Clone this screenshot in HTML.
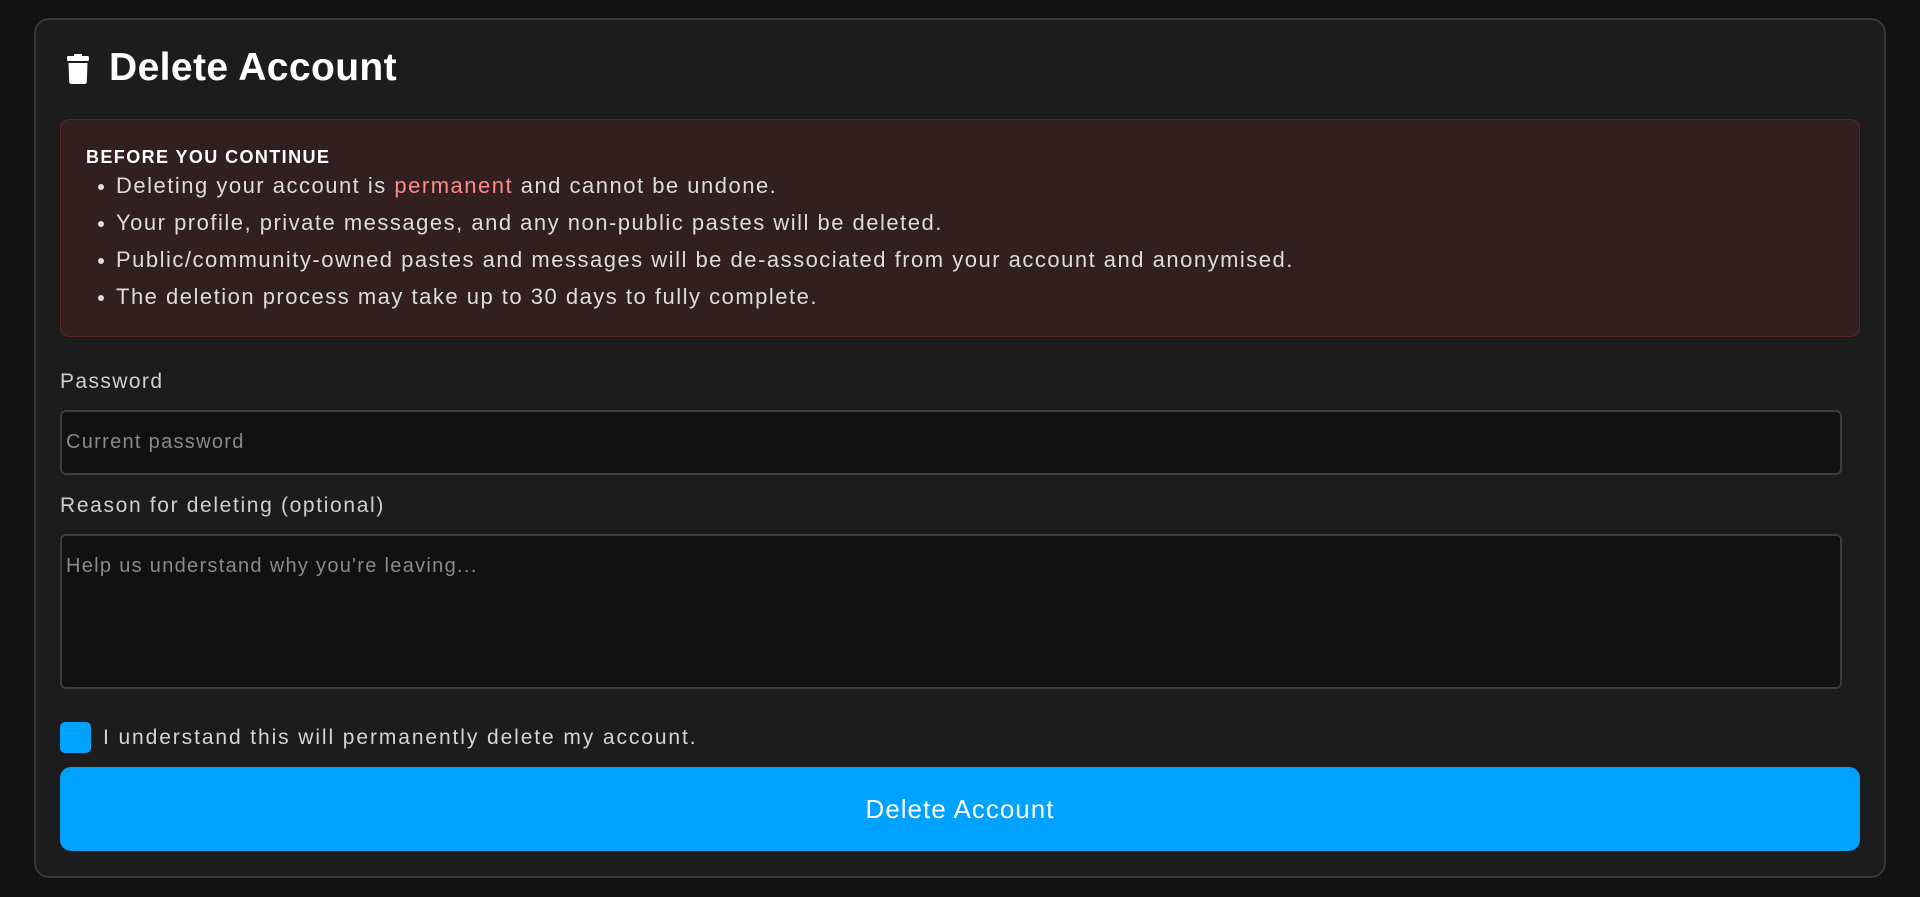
<!DOCTYPE html>
<html><head><meta charset="utf-8"><style>
*{box-sizing:border-box;margin:0;padding:0}
html,body{width:1920px;height:897px;background:#121212;overflow:hidden;font-family:"Liberation Sans",sans-serif}
.card{position:absolute;left:34px;top:18px;width:1852px;height:860px;background:#1c1c1c;border:2px solid #363636;border-radius:15px}
.title{position:absolute;left:109px;top:46px;font-size:39px;font-weight:bold;color:#fff;letter-spacing:0.4px}
.icon{position:absolute;left:67px;top:54px}
.warn{position:absolute;left:60px;top:119px;width:1800px;height:218px;background:#321f20;border:1px solid #5a2626;border-radius:9px}
.wh{position:absolute;left:86px;top:147px;font-size:18px;font-weight:bold;color:#fff;letter-spacing:1.4px}
.li{position:absolute;left:116px;font-size:22px;color:#ddd;letter-spacing:1.5px}
.li:before{content:"";position:absolute;left:-18px;top:11px;width:6px;height:6px;border-radius:50%;background:#ddd}
.red{color:#ff8a8a}
.lbl{position:absolute;left:60px;font-size:21px;color:#cfcfcf;letter-spacing:1.5px}
.inp{position:absolute;left:60px;width:1782px;background:#111;border:2px solid #3d3d3d;border-radius:6px}
.ph{position:absolute;left:66px;font-size:20px;color:#8a8a8a;letter-spacing:1.3px}
.cb{position:absolute;left:60px;top:722px;width:31px;height:31px;background:#00a2ff;border-radius:5px}
.btn{position:absolute;left:60px;top:767px;width:1800px;height:84px;background:#00a2ff;border-radius:11px;color:#fff;font-size:26px;text-align:center;line-height:84px;letter-spacing:1px}
</style></head><body>
<div class="card"></div>
<svg class="icon" width="22" height="30" viewBox="0 0 22 30"><rect x="0" y="2" width="22" height="5" rx="1.5" fill="#fff"/><rect x="7" y="0" width="8" height="4" rx="1" fill="#fff"/><path d="M1.5 9 H20.5 L19.8 28 Q19.6 30 17.5 30 H4.5 Q2.4 30 2.2 28 Z" fill="#fff"/></svg>
<div class="title">Delete Account</div>
<div class="warn"></div>
<div class="wh">BEFORE YOU CONTINUE</div>
<div class="li" style="top:173px">Deleting your account is <span class="red">permanent</span> and cannot be undone.</div>
<div class="li" style="top:210px">Your profile, private messages, and any non-public pastes will be deleted.</div>
<div class="li" style="top:247px">Public/community-owned pastes and messages will be de-associated from your account and anonymised.</div>
<div class="li" style="top:284px">The deletion process may take up to 30 days to fully complete.</div>
<div class="lbl" style="top:370px;letter-spacing:1.4px">Password</div>
<div class="inp" style="top:410px;height:65px"></div>
<div class="ph" style="top:431px">Current password</div>
<div class="lbl" style="top:494px;letter-spacing:1.65px">Reason for deleting (optional)</div>
<div class="inp" style="top:534px;height:155px"></div>
<div class="ph" style="top:555px">Help us understand why you're leaving...</div>
<div class="cb"></div>
<div class="lbl" style="left:103px;top:726px;color:#d5d5d5;letter-spacing:1.9px">I understand this will permanently delete my account.</div>
<div class="btn">Delete Account</div>
</body></html>
